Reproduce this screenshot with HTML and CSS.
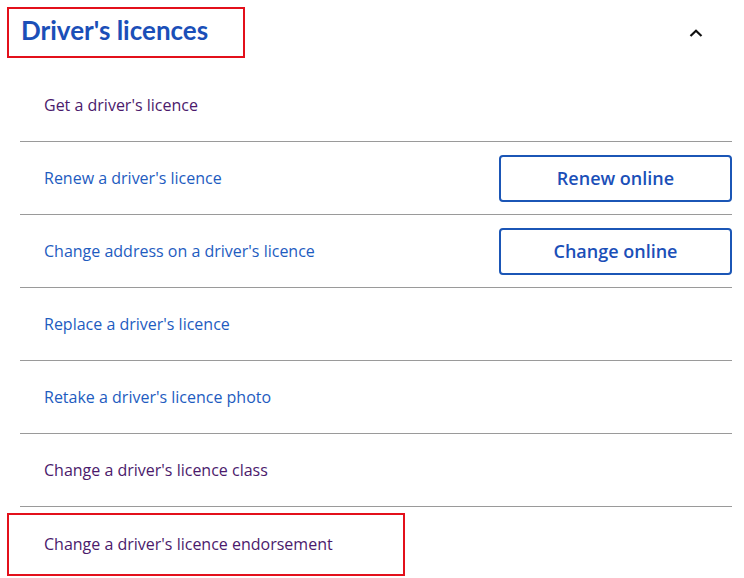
FILE: index.html
```html
<!DOCTYPE html>
<html lang="en">
<head>
    <meta charset="UTF-8">
    <meta name="viewport" content="width=device-width, initial-scale=1.0">
    <title>Driver's licences</title>
    <link rel="stylesheet" href="styles.css">
</head>
<body>
    <!-- Accordion section -->
    <div class="accordion">
        <div class="accordion-header">
            <h2 class="accordion-title"><span class="highlight-box">Driver's licences</span></h2>
            <button class="accordion-toggle" aria-label="Collapse">
                <svg width="14" height="8" viewBox="0 0 14 8">
                    <polyline points="1.5,7 7,1.8 12.5,7" fill="none" stroke="#111" stroke-width="2.2"/>
                </svg>
            </button>
        </div>
        <ul class="link-list">
            <li class="link-row"><a href="#" class="visited">Get a driver's licence</a></li>
            <li class="link-row">
                <a href="#">Renew a driver's licence</a>
                <button class="action-button">Renew online</button>
            </li>
            <li class="link-row">
                <a href="#">Change address on a driver's licence</a>
                <button class="action-button">Change online</button>
            </li>
            <li class="link-row"><a href="#">Replace a driver's licence</a></li>
            <li class="link-row"><a href="#">Retake a driver's licence photo</a></li>
            <li class="link-row"><a href="#" class="visited">Change a driver's licence class</a></li>
            <li class="link-row last">
                <span class="highlight-row"><a href="#" class="visited">Change a driver's licence endorsement</a></span>
            </li>
        </ul>
    </div>
</body>
</html>
```

FILE: styles.css
```css
body {
    font-family: 'Open Sans', sans-serif;
    margin: 0;
    padding: 0;
    background-color: #fff;
}
.accordion {
    padding: 7px 12px 0 7px;
}
.accordion-header {
    display: flex;
    align-items: flex-start;
    justify-content: space-between;
    height: 62px;
}
.accordion-title {
    margin: 0;
}
.highlight-box {
    display: flex;
    align-items: center;
    width: 222px;
    height: 42px;
    padding: 0 0 5px 12px;
    border: 2px solid #e3101b;
    font-family: 'Lato', sans-serif;
    font-size: 26px;
    font-weight: 700;
    color: #1b4fb8;
}
.accordion-toggle {
    background: none;
    border: none;
    padding: 0;
    margin: 18px 29px 0 0;
    cursor: pointer;
}
.link-list {
    list-style: none;
    margin: 0 0 0 13px;
    padding: 0;
}
.link-row {
    display: flex;
    align-items: center;
    justify-content: space-between;
    height: 72px;
    padding-left: 24px;
    border-bottom: 1px solid #9a9a9a;
}
.link-row.last {
    border-bottom: none;
    padding-left: 0;
}
.link-row a {
    font-size: 16px;
    color: #1e5cbf;
    text-decoration: none;
}
.link-row a.visited {
    color: #4b1a6c;
}
.highlight-row {
    display: flex;
    align-items: center;
    width: 359px;
    height: 59px;
    margin: 2px 0 0 -13px;
    padding-left: 35px;
    border: 2px solid #e3101b;
}
.action-button {
    width: 233px;
    height: 47px;
    background-color: #fff;
    border: 2px solid #1b56b6;
    border-radius: 4px;
    font-family: 'Open Sans', sans-serif;
    font-size: 18px;
    font-weight: 600;
    color: #1b4fb8;
    cursor: pointer;
}
```
